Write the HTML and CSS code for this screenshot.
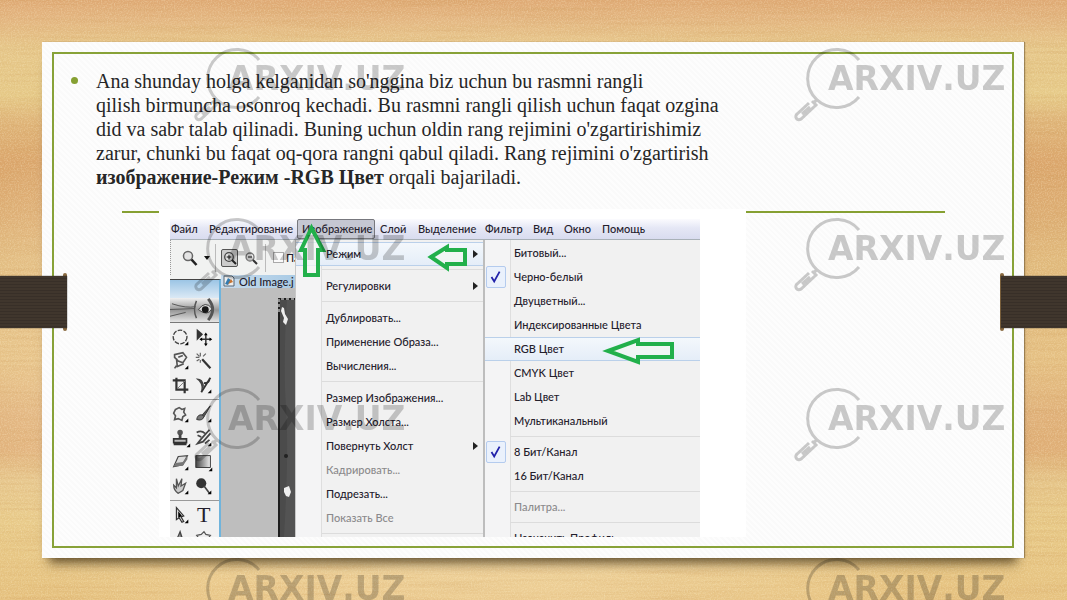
FILE: index.html
```html
<!DOCTYPE html>
<html lang="uz">
<head>
<meta charset="utf-8">
<title>Rang rejimi</title>
<meta name="viewport" content="width=device-width, initial-scale=1">
<link rel="stylesheet" href="styles.css">
</head>
<body>
<svg class="grain" aria-hidden="true">
  <filter id="fibre" x="0" y="0" width="100%" height="100%"><feTurbulence type="fractalNoise" baseFrequency="0.008 0.35" numOctaves="3" seed="4"/><feColorMatrix values="0 0 0 0 .6  0 0 0 0 .32  0 0 0 0 .1  .9 0 0 0 -.37"/></filter>
  <filter id="speck" x="0" y="0" width="100%" height="100%"><feTurbulence type="fractalNoise" baseFrequency="0.7" numOctaves="2" seed="9"/><feColorMatrix values="0 0 0 0 1  0 0 0 0 .9  0 0 0 0 .65  1.2 0 0 0 -.5"/></filter>
  <rect width="100%" height="100%" filter="url(#fibre)"/>
  <rect width="100%" height="100%" filter="url(#speck)"/>
</svg>

<main class="paper">
  <div class="frame">
    <ul class="copy">
      <li>Ana shunday holga kelganidan so'nggina biz uchun bu rasmni rangli<br>
      qilish birmuncha osonroq kechadi. Bu rasmni rangli qilish uchun faqat ozgina<br>
      did va sabr talab qilinadi. Buning uchun oldin rang rejimini o'zgartirishimiz<br>
      zarur, chunki bu faqat oq-qora rangni qabul qiladi. Rang rejimini o'zgartirish<br>
      <strong>изображение-Режим -RGB Цвет</strong> orqali bajariladi.</li>
    </ul>

    <section class="stage">
      <hr class="rule">
      <figure class="shot">
        <nav class="menubar">
          <button>Файл</button><button>Редактирование</button><button class="open">Изображение</button><button>Слой</button><button>Выделение</button><button>Фильтр</button><button>Вид</button><button>Окно</button><button>Помощь</button>
        </nav>
        <div class="workspace">
          <div class="editor">
            <div class="options">
              <svg class="lens" viewBox="0 0 18 18"><circle cx="7" cy="7" r="4.5" fill="#e4e4e4" stroke="#666" stroke-width="1.5"/><path d="M10.5 10.5L15.5 16" stroke="#222" stroke-width="2.6"/></svg>
              <svg class="caret" viewBox="0 0 6 6"><path d="M0 1h6L3 5z" fill="#111"/></svg>
              <i class="divider"></i>
              <button class="zoom on" aria-label="+"><svg viewBox="0 0 16 16"><circle cx="7" cy="7" r="4.3" fill="#ddd" stroke="#444" stroke-width="1.3"/><path d="M10 10l4 4" stroke="#222" stroke-width="2"/><path d="M4.7 7h4.6M7 4.700v4.600" stroke="#111"/></svg></button>
              <button class="zoom" aria-label="-"><svg viewBox="0 0 16 16"><circle cx="7" cy="7" r="4" fill="#eee" stroke="#777" stroke-width="1.3"/><path d="M10 10l4 4" stroke="#333" stroke-width="2"/><path d="M5 7h4" stroke="#111"/></svg></button>
              <i class="divider"></i>
              <label class="fit"><input type="checkbox">Па</label>
            </div>
            <div class="docs">
              <div class="tools">
                <div class="cap"></div>
                <svg class="eye" viewBox="0 0 50 25" preserveAspectRatio="none"><defs><linearGradient id="skin" x2="0" y2="1"><stop offset="0" stop-color="#f0f0f0"/><stop offset=".5" stop-color="#969696"/><stop offset="1" stop-color="#e5e5e5"/></linearGradient></defs><path fill="url(#skin)" d="M0 0h50v25H0z"/><path d="M0 12L25 11M2 6q15 5 24 3M0 19l16-4" fill="none" stroke="#555"/><path d="M27 3q-4 9 0 18" fill="none" stroke="#555" stroke-width="1.500"/><path d="M29 12Q36 2 43 11Q38 20 29 12" fill="#d7d7d7" stroke="#444"/><circle cx="36" cy="12" r="3.500" fill="#171717"/><path d="M39 1q9 11 0 22" fill="none" stroke="#555" stroke-width="3"/></svg>
                <div class="set">
                  <button aria-label="Marquee"><svg viewBox="0 0 24 24"><circle cx="11" cy="12" r="7.500" fill="none" stroke="#444" stroke-width="1.500" stroke-dasharray="5 1.500"/><path d="M20 17v4h-4z"/></svg></button>
                  <button aria-label="Move"><svg viewBox="0 0 24 24"><path d="M4 3v13l7-7z" fill="#333"/><path d="M14 9v11M8.500 14.500h11" stroke="#333" stroke-width="1.600"/><path d="M14 7l2 3h-4zM14 22l2-3h-4zM7 14.500l3-2v4zM21 14.500l-3-2v4z"/></svg></button>
                  <button aria-label="Lasso"><svg viewBox="0 0 24 24"><path d="M5 5l9-2 4 5-4 6-5-2-4-4zM9 8l5-2M7 9l1 9 7-3M7 17l-2 3" fill="none" stroke="#555" stroke-width="1.800"/><path d="M20 17v4h-4z"/></svg></button>
                  <button aria-label="Wand"><svg viewBox="0 0 24 24"><path d="M10 10l9 10" stroke="#333" stroke-width="2.400"/><path d="M8 3v4M8 11v3M3 8h4M11 7l3-3M4 4l3 3M4 12l3-2" stroke="#666" stroke-width="1.300"/></svg></button>
                  <button aria-label="Crop"><svg viewBox="0 0 24 24"><path d="M7 4v13h13M3 7h13v14" fill="none" stroke="#333" stroke-width="2.400"/><path d="M8 16l9-9" stroke="#777"/></svg></button>
                  <button aria-label="Slice"><svg viewBox="0 0 24 24"><path d="M3 5q8-1 9 8l-3 6q2-9-6-14z" fill="#444"/><path d="M19 4L9 20M12 10q6 0 6-5" fill="none" stroke="#333" stroke-width="2"/><path d="M20 17v4h-4z"/></svg></button>
                </div>
                <div class="set">
                  <button aria-label="Patch"><svg viewBox="0 0 24 24"><path d="M6 7l4-2 3 2 3-1-1 4 2 3-3 2-1 4-4-2-4 1 1-4-2-3z" fill="#eee" stroke="#555" stroke-width="1.800"/><path d="M20 17v4h-4z"/></svg></button>
                  <button aria-label="Brush"><svg viewBox="0 0 24 24"><path d="M19 3L10 13l2 2z" fill="#555" stroke="#333"/><path d="M10 13q-5-1-6 5 6 2 8-3z" fill="#777" stroke="#333"/><path d="M20 17v4h-4z"/></svg></button>
                  <button aria-label="Stamp"><svg viewBox="0 0 24 24"><circle cx="11" cy="6" r="3" fill="#555"/><path d="M9.500 8h3v6h-3z" fill="#444"/><path d="M4 13h14v4H4zM4 19h14" fill="#bbb" stroke="#333" stroke-width="1.800"/><path d="M22 18v4h-4z"/></svg></button>
                  <button aria-label="History"><svg viewBox="0 0 24 24"><path d="M18 3L9 13l-4 5 6-2 8-9M4 6q5-3 9 1M5 9l4 2M13 18l5-4" fill="none" stroke="#444" stroke-width="1.900"/><path d="M20 17v4h-4z"/></svg></button>
                  <button aria-label="Eraser"><svg viewBox="0 0 24 24"><path d="M9 6l10-1-5 10-10 2z" fill="#ddd" stroke="#444" stroke-width="1.300"/><path d="M4 17l2-4 8-1 5-7v4l-5 7z" fill="#777"/><path d="M20 17v4h-4z"/></svg></button>
                  <button aria-label="Gradient"><svg viewBox="0 0 24 24"><defs><linearGradient id="ramp"><stop stop-color="#444"/><stop offset="1" stop-color="#eee"/></linearGradient></defs><path d="M3 5h16v13H3z" fill="url(#ramp)" stroke="#333"/><path d="M21 18v4h-4z"/></svg></button>
                  <button aria-label="Smudge"><svg viewBox="0 0 24 24"><path d="M7 4l2 8 4-8-1 8 5-3-3 8-5 3q-5-3-5-9l3 3z" fill="#ccc" stroke="#555" stroke-width="1.400"/><path d="M20 17v4h-4z"/></svg></button>
                  <button aria-label="Dodge"><svg viewBox="0 0 24 24"><circle cx="9" cy="9" r="5.500" fill="#333"/><path d="M12 12l6 8" stroke="#444" stroke-width="1.800"/><path d="M20 17v4h-4z"/></svg></button>
                </div>
                <div class="set">
                  <button aria-label="Select"><svg viewBox="0 0 24 24"><path d="M7 4v13l3-2 3 5 2-1-3-5 3-1z" fill="#ddd" stroke="#333" stroke-width="1.300"/><path d="M9 8v7l4-2z"/><path d="M20 17v4h-4z"/></svg></button>
                  <button aria-label="Type" class="type">T</button>
                  <button aria-label="Pen"><svg viewBox="0 0 24 24"><path d="M11 4l-5 12h9z" fill="#ddd" stroke="#444" stroke-width="1.400"/><path d="M11 6v8" stroke="#333"/></svg></button>
                  <button aria-label="Shape"><svg viewBox="0 0 24 24"><path d="M4 8l5-1 3-3 2 3 5 1-3 4v5H6l1-5z" fill="#eee" stroke="#555" stroke-width="1.300"/></svg></button>
                </div>
              </div>
              <div class="document">
                <div class="tab"><svg viewBox="0 0 12 12"><path d="M1 1h8l2 2v8H1z" fill="#eee" stroke="#567"/><path d="M2 9l3-6 3 2-3 5z" fill="#347bb0"/><path d="M5 9l3-5 2 3z" fill="#c77431"/></svg><span>Old Image.j</span></div>
                <svg class="photo" viewBox="0 0 17 239" preserveAspectRatio="none"><path d="M0 0h17v239H0z" fill="#4b4b4b"/><path d="M9 0q-4 65-1 110T6 239h11V0z" fill="#5b5b5b" opacity=".5"/><path d="M1 239V1h16" fill="none" stroke="#111" stroke-width="1.500"/><path d="M1 14V1h16" fill="none" stroke="#fff" stroke-dasharray="3 2"/><path d="M4 9l2 1 1 6 3 5-2 6-3-3 1-4-3-7zM6 190l5-2 2 6-2 5-3-1-2-4z" fill="#eee"/><circle cx="8" cy="158" r="2" fill="#222"/></svg>
              </div>
            </div>
          </div>

          <ul class="menu">
            <li class="hover"><button>Режим<i class="arrow"></i></button></li>
            <li class="sep"></li>
            <li><button>Регулировки<i class="arrow"></i></button></li>
            <li class="sep"></li>
            <li><button>Дублировать...</button></li>
            <li><button>Применение Образа...</button></li>
            <li><button>Вычисления...</button></li>
            <li class="sep"></li>
            <li><button>Размер Изображения...</button></li>
            <li><button>Размер Холста...</button></li>
            <li><button>Повернуть Холст<i class="arrow"></i></button></li>
            <li><button disabled>Кадрировать...</button></li>
            <li><button>Подрезать...</button></li>
            <li><button disabled>Показать Все</button></li>
            <li class="sep"></li>
          </ul>

          <ul class="menu sub">
            <li><button>Битовый...</button></li>
            <li class="checked"><svg viewBox="0 0 20 22"><path d="M5 11l3 5L14 5" fill="none" stroke="#2222aa" stroke-width="2"/></svg><button>Черно-белый</button></li>
            <li><button>Двуцветный...</button></li>
            <li><button>Индексированные Цвета</button></li>
            <li class="hover"><button>RGB Цвет</button></li>
            <li><button>CMYK Цвет</button></li>
            <li><button>Lab Цвет</button></li>
            <li><button>Мультиканальный</button></li>
            <li class="sep"></li>
            <li class="checked"><svg viewBox="0 0 20 22"><path d="M5 11l3 5L14 5" fill="none" stroke="#2222aa" stroke-width="2"/></svg><button>8 Бит/Канал</button></li>
            <li><button>16 Бит/Канал</button></li>
            <li class="sep"></li>
            <li><button disabled>Палитра...</button></li>
            <li class="sep"></li>
            <li><button>Назначить Профиль</button></li>
          </ul>
        </div>
        <svg class="pointers" viewBox="0 0 587 328" fill="#f3f7f3" stroke="#22b04b" stroke-width="4" aria-hidden="true">
          <path d="M152.500 19L142 41h4v25h13V41h5z"/>
          <path d="M272 48L288 38v3h18v14H288v4z"/>
          <path d="M449 142L479 131v4h34v13H479v5z"/>
        </svg>
      </figure>
    </section>
  </div>
</main>

<div class="ribbon left"></div>
<div class="ribbon right"></div>

<div class="marks" aria-hidden="true">
  <svg viewBox="0 0 220 90"><path d="M69 20A29 29 0 1 0 69 57M27 59l-3 4M19 63L7 74a3 3 0 0 0 4 5L26 65l-4-4M12 74l8-7"/><text x="38" y="50">ARXIV.UZ</text></svg>
  <svg viewBox="0 0 220 90"><path d="M69 20A29 29 0 1 0 69 57M27 59l-3 4M19 63L7 74a3 3 0 0 0 4 5L26 65l-4-4M12 74l8-7"/><text x="38" y="50">ARXIV.UZ</text></svg>
  <svg viewBox="0 0 220 90"><path d="M69 20A29 29 0 1 0 69 57M27 59l-3 4M19 63L7 74a3 3 0 0 0 4 5L26 65l-4-4M12 74l8-7"/><text x="38" y="50">ARXIV.UZ</text></svg>
  <svg viewBox="0 0 220 90"><path d="M69 20A29 29 0 1 0 69 57M27 59l-3 4M19 63L7 74a3 3 0 0 0 4 5L26 65l-4-4M12 74l8-7"/><text x="38" y="50">ARXIV.UZ</text></svg>
  <svg viewBox="0 0 220 90"><path d="M69 20A29 29 0 1 0 69 57M27 59l-3 4M19 63L7 74a3 3 0 0 0 4 5L26 65l-4-4M12 74l8-7"/><text x="38" y="50">ARXIV.UZ</text></svg>
  <svg viewBox="0 0 220 90"><path d="M69 20A29 29 0 1 0 69 57M27 59l-3 4M19 63L7 74a3 3 0 0 0 4 5L26 65l-4-4M12 74l8-7"/><text x="38" y="50">ARXIV.UZ</text></svg>
  <svg viewBox="0 0 220 90"><path d="M69 20A29 29 0 1 0 69 57M27 59l-3 4M19 63L7 74a3 3 0 0 0 4 5L26 65l-4-4M12 74l8-7"/><text x="38" y="50">ARXIV.UZ</text></svg>
  <svg viewBox="0 0 220 90"><path d="M69 20A29 29 0 1 0 69 57M27 59l-3 4M19 63L7 74a3 3 0 0 0 4 5L26 65l-4-4M12 74l8-7"/><text x="38" y="50">ARXIV.UZ</text></svg>
</div>
</body>
</html>
```
FILE: styles.css
```css
* { box-sizing: border-box; }

body {
  margin: 0;
  min-height: 100vh;
  padding: 42px 43px 42px 42px;
  display: flex;
  position: relative;
  overflow-x: hidden;
  font-family: "Liberation Serif", serif;
  background:
    radial-gradient(ellipse at 45% 60%, rgba(255, 236, 205, .75), rgba(255, 236, 205, 0) 68%),
    linear-gradient(#dfaa75 0%, #e3b580 3%, #e6c78a 8%, #e6ca88 16%, #dfb579 20%, #dba66c 27%, #ddae74 36%, #e1bb7e 44%, #e5c083 60%, #e0b17a 69%, #dfae76 75%, #e5c488 80%, #e8ca88 87%, #e6c280 100%);
}

.grain {
  position: absolute;
  inset: 0;
  width: 100%;
  height: 100%;
  opacity: .55;
}

.paper {
  position: relative;
  flex: 1;
  min-width: 0;
  display: flex;
  padding: 10px;
  background: repeating-linear-gradient(45deg, #fdfdfd 0 2px, #fafafa 2px 4px);
  box-shadow: 1px 0 1px rgba(60, 40, 10, .4), 0 12px 10px -7px rgba(50, 35, 10, .7);
}

.frame {
  flex: 1;
  min-width: 0;
  border: 2px solid #88a238;
}

.copy {
  margin: 0;
  padding: 15px 20px 0 42px;
  list-style: none;
  font-size: 20px;
  line-height: 24px;
  color: #262626;
}

.copy li { position: relative; }

.copy li::before {
  content: "";
  position: absolute;
  left: -25px;
  top: 8px;
  width: 7px;
  height: 7px;
  border-radius: 50%;
  background: #86a032;
}

.stage {
  display: grid;
  margin-top: 20px;
}

.rule {
  grid-area: 1 / 1;
  align-self: start;
  margin: 2px 67px 0 68px;
  border: 0;
  height: 2px;
  background: #86a032;
}

.shot {
  grid-area: 1 / 1;
  position: relative;
  width: 587px;
  height: 328px;
  margin: 0 0 0 105px;
  padding: 10px 46px 0 11px;
  background: #fff;
  font: 500 11px/14px Lato, Roboto, "Noto Sans", sans-serif;
  color: #24202c;
}

button {
  margin: 0;
  padding: 0;
  border: 0;
  background: none;
  font: inherit;
  color: inherit;
  text-align: left;
  white-space: nowrap;
}

.menubar {
  display: grid;
  grid-template-columns: 38px 88px 83px 38px 67px 48px 31px 38px 1fr;
  height: 21px;
  padding-left: 1px;
  border-bottom: 1px solid #a9b1b8;
  background: linear-gradient(#fbfbfe, #e5e7f5 45%, #d9dcef);
}

.menubar .open {
  margin-right: 5px;
  padding-left: 4px;
  border: 1px solid #77787e;
  border-radius: 2px;
  background: #c5c7d2;
}

.workspace {
  display: grid;
  grid-template-columns: 125px 188px 217px;
  height: 297px;
  overflow: hidden;
}

.editor {
  display: flex;
  flex-direction: column;
  min-height: 0;
  overflow: hidden;
  background: #f1f2f1;
}

.options {
  display: flex;
  flex: none;
  align-items: center;
  gap: 5px;
  height: 35px;
  padding-left: 10px;
  border-left: 1px dotted #999;
}

.lens { width: 18px; height: 18px; flex: none; }
.caret { width: 6px; height: 6px; flex: none; }
.divider { width: 1px; height: 28px; background: #bbb; flex: none; }
.zoom { width: 17px; height: 18px; flex: none; }
.zoom svg { display: block; width: 16px; height: 16px; }
.zoom.on { border: 1px solid #555; border-radius: 2px; background: #ccc; }
.fit { display: flex; align-items: center; gap: 2px; }
.fit input { appearance: none; width: 11px; height: 11px; margin: 0 0 0 2px; border: 1px solid #a9a9a9; background: #fafafa; }

.docs { flex: 1; min-height: 0; display: grid; grid-template-columns: 51px minmax(0, 1fr); }

.tools {
  margin-top: 4px;
  border-top: 1px solid #444;
  border-right: 2px solid #70b4dc;
  background: #f1f1f1;
}

.cap { height: 18px; background: linear-gradient(#9cc5e5, #dbe9f5); }
.eye { display: block; width: 100%; height: 25px; border-bottom: 1px solid #777; }

.set {
  display: grid;
  grid-template-columns: 23px 23px;
  padding: 2px 0;
  border-bottom: 1px solid #999;
}

.set svg { display: block; width: 22px; height: 24px; }
.set button { height: 24px; }
.set .type { padding-left: 4px; font: 22px/24px "Liberation Serif", serif; }

.document { display: flex; flex-direction: column; background: #bebebe; }

.tab {
  display: flex;
  flex: none;
  gap: 4px;
  height: 13px;
  padding-left: 2px;
  background: linear-gradient(90deg, #c9dced, #a9cbe5);
  line-height: 13px;
  white-space: nowrap;
}

.tab svg { width: 12px; height: 12px; flex: none; }
.photo { flex: none; align-self: flex-end; width: 17px; height: 239px; margin-top: 10px; }

.menu {
  margin: 0;
  padding: 2px 0 0;
  list-style: none;
  background: linear-gradient(90deg, #f4f4f5 25px, #dedede 25px 26px, #f1f1f1 26px);
  border-left: 1px solid #c8c8c8;
}

.menu li { display: flex; position: relative; height: 24px; padding-left: 30px; }
.menu button { flex: 1; display: flex; align-items: center; justify-content: space-between; padding-right: 5px; }
.menu button:disabled { color: #8b8a8c; }
.menu .sep { height: 8px; }
.menu .sep::before { content: ""; flex: 1; height: 1px; margin: 3px 0 0 -4px; background: #dcdcdc; }
.menu .hover { background: linear-gradient(#f4f8fc, #e4edf8); box-shadow: inset 0 1px #bad0ea, inset 0 -1px #bad0ea; }
.arrow { border: 4px solid transparent; border-left: 5px solid #222; border-right: 0; }

.sub { padding-top: 1px; border-left: 2px solid #bdbdbd; }
.sub li { padding-left: 29px; }
.sub .sep { height: 7px; }

.checked svg {
  position: absolute;
  left: 1px;
  top: 1px;
  width: 20px;
  height: 22px;
  border: 1px solid #b4cbee;
  border-radius: 2px;
  background: #eaf1fc;
}

.pointers { position: absolute; left: 0; top: 0; width: 587px; height: 328px; fill-opacity: .75; pointer-events: none; }

.ribbon {
  position: absolute;
  top: 46%;
  height: 52px;
  width: 67px;
}

.ribbon::after {
  content: "";
  position: absolute;
  inset: 0 0 0 1px;
  background: repeating-linear-gradient(#40362d 0 2px, #382f28 2px 3px);
  box-shadow: 0 0 1px #222;
}

.ribbon::before {
  content: "";
  position: absolute;
  top: -3px;
  bottom: -3px;
  width: 4px;
  border-radius: 2px;
  background: #8a6a40;
}

.ribbon.left { left: 0; }
.ribbon.left::after { left: 0; }
.ribbon.left::before { right: 0; }
.ribbon.right { right: 0; }
.ribbon.right::before { left: 0; }

.marks {
  position: absolute;
  inset: 0;
  overflow: hidden;
  display: grid;
  grid-template-columns: repeat(2, 600px);
  grid-auto-rows: 90px;
  row-gap: 80px;
  padding: 40px 0 0 190px;
  pointer-events: none;
  opacity: .2;
}

.marks svg { width: 220px; height: 90px; }
.marks path { fill: none; stroke: #000; stroke-width: 3px; }
.marks text { font: bold 33px "DejaVu Sans", sans-serif; font-kerning: none; fill: #000; }
```
